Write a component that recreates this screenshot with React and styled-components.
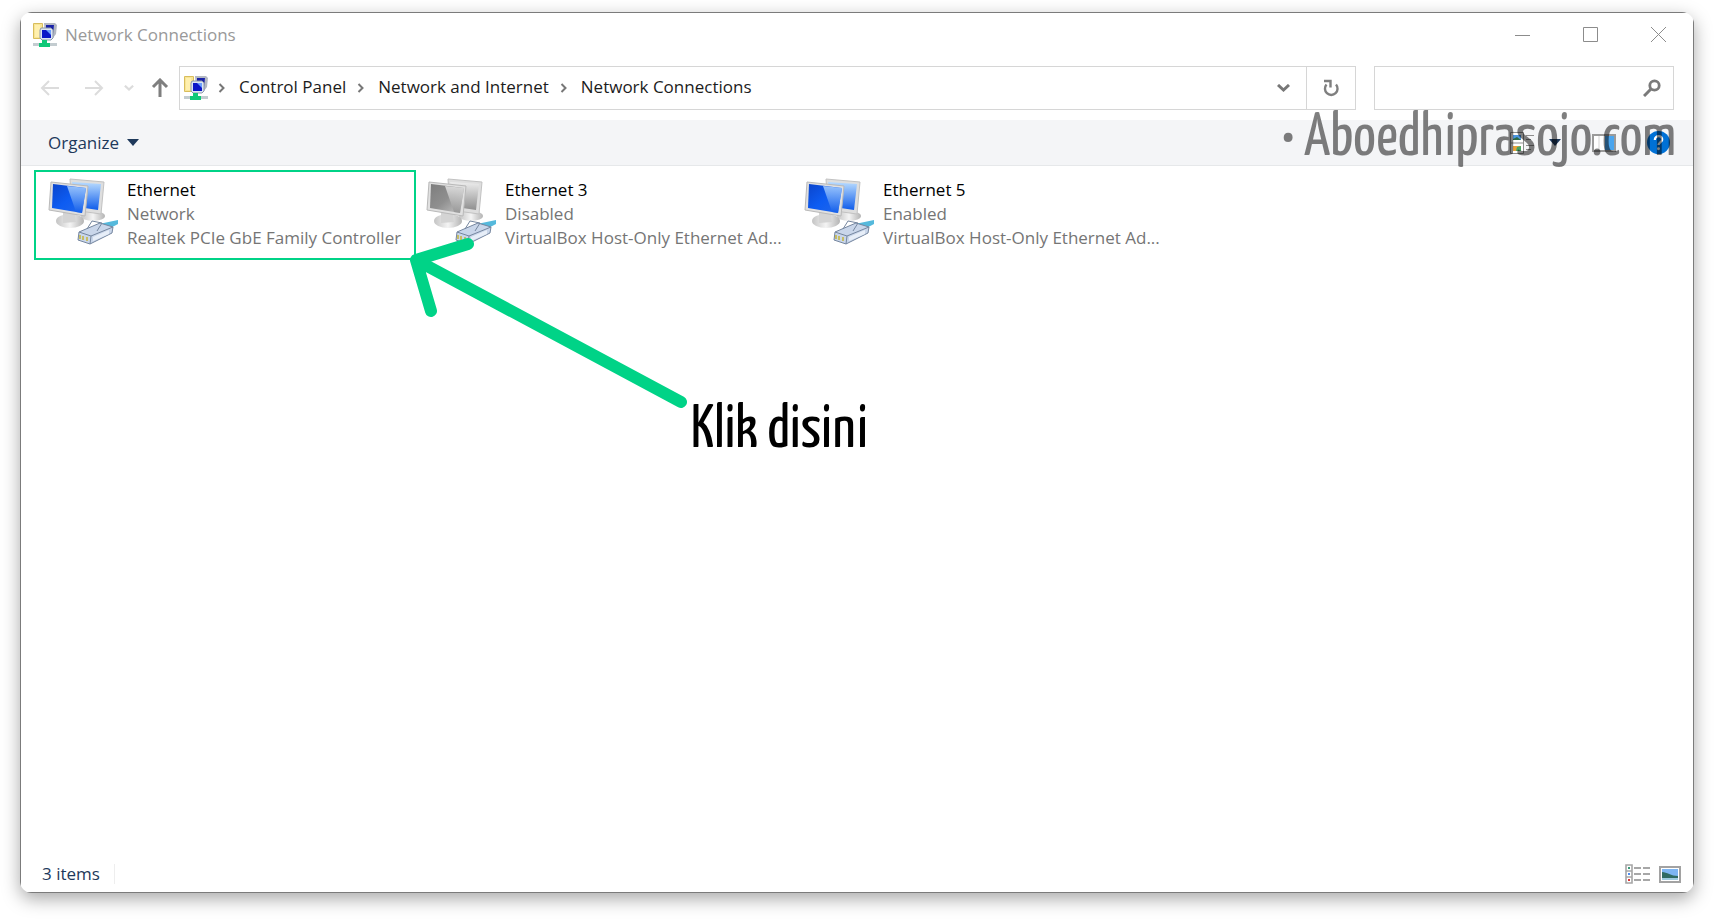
import React from "react";
import styled, { createGlobalStyle, css } from "styled-components";

const GlobalStyle = createGlobalStyle`
  * { box-sizing: border-box; }
  html, body, #root { height: 100%; }
  body { margin: 0; background: #fff; font-family: "Open Sans", "Noto Sans", sans-serif; font-size: 17px; line-height: 24px; }
  button, input { font: inherit; margin: 0; }
`;

const Desktop = styled.div`
  display: flex;
  min-height: 100%;
  padding: 12px 20px 29px 20px;
`;

const Window = styled.main`
  position: relative;
  flex: 1;
  min-width: 0;
  display: flex;
  flex-direction: column;
  padding: 1px;
  border-radius: 12px;
  background:
    linear-gradient(#7b7b7b, #7b7b7b) top / 100% 1px no-repeat,
    linear-gradient(#7b7b7b, #7b7b7b) bottom / 100% 1px no-repeat,
    linear-gradient(#7b7b7b, #7b7b7b) left / 1px 100% no-repeat,
    linear-gradient(#7b7b7b, #7b7b7b) right / 1px 100% no-repeat,
    #fff;
  box-shadow: 0 6px 18px rgba(0, 0, 0, 0.34);
`;

const TitleBar = styled.header`
  display: flex;
  align-items: center;
  height: 44px;
  padding-left: 12px;
`;

const Title = styled.h1`
  flex: 1;
  margin: 0 8px;
  font-size: 17px;
  font-weight: 400;
  color: #999;
`;

const Caption = styled.button`
  display: flex;
  align-items: center;
  justify-content: center;
  width: 68px;
  height: 42px;
  padding: 0;
  border: 0;
  background: none;
  color: #8c8c8c;
`;

const NavRow = styled.nav`
  display: flex;
  align-items: center;
  height: 63px;
  padding: 0 19px 2px 15px;
`;

const NavButton = styled.button`
  display: flex;
  align-items: center;
  justify-content: center;
  width: ${(p) => p.$width}px;
  height: 42px;
  padding: 0;
  border: 0;
  background: none;
  color: ${(p) => (p.disabled ? "#dcdcdc" : "#7f7f7f")};
`;

const UpButton = styled(NavButton)`
  margin-left: 6px;
`;

const field = css`
  display: flex;
  align-items: center;
  height: 44px;
  border: 1px solid #d6d6d6;
  background: #fff;
`;

const AddressBar = styled.div`
  ${field}
  flex: 1;
  min-width: 0;
  padding-left: 4px;
`;

const Crumbs = styled.ol`
  display: flex;
  align-items: center;
  flex: 1;
  margin: 0;
  padding: 0;
  list-style: none;
`;

const Crumb = styled.li`
  display: flex;
  align-items: center;
  padding-right: 1px;
  svg { margin: 0 13px 0 10px; }
`;

const CrumbLink = styled.a`
  padding-bottom: 2px;
  color: #1c1c1c;
  text-decoration: none;
  white-space: nowrap;
`;

const RefreshButton = styled(NavButton)`
  border-left: 1px solid #d6d6d6;
`;

const SearchBox = styled.label`
  ${field}
  width: 300px;
  margin-left: 18px;
  padding: 0 12px 0 8px;
`;

const SearchInput = styled.input`
  flex: 1;
  min-width: 0;
  border: 0;
  outline: 0;
  background: none;
`;

const Toolbar = styled.div`
  display: flex;
  align-items: center;
  justify-content: space-between;
  height: 46px;
  padding: 0 23px 0 27px;
  background: #f4f5f7;
  border-bottom: 1px solid #e6e8ea;
`;

const ToolButton = styled.button`
  display: flex;
  align-items: center;
  gap: ${(p) => p.$gap ?? 8}px;
  padding: 0;
  border: 0;
  background: none;
  color: #1e395b;
`;

const ToolGroup = styled.div`
  display: flex;
  align-items: center;
  gap: 31px;
`;

const Connections = styled.ul`
  display: flex;
  flex: 1;
  align-items: flex-start;
  margin: 0;
  padding: 4px 13px;
  list-style: none;
`;

const Connection = styled.li`
  display: flex;
  gap: 7px;
  width: ${(p) => (p.$marked ? 382 : 378)}px;
  height: 90px;
  padding: 6px 8px 6px ${(p) => (p.$marked ? 12 : 8)}px;
  border: 2px solid ${(p) => (p.$marked ? "#00d387" : "transparent")};
`;

const Details = styled.div`
  min-width: 0;
  white-space: nowrap;
`;

const Line = styled.div`
  color: ${(p) => (p.$strong ? "#000" : "#757575")};
`;

const StatusBar = styled.footer`
  display: flex;
  align-items: center;
  justify-content: space-between;
  height: 36px;
  padding: 0 12px 0 21px;
`;

const Count = styled.span`
  padding-right: 14px;
  border-right: 1px solid #eee;
  line-height: 20px;
  color: #1e395b;
`;

const ViewModes = styled.div`
  display: flex;
  gap: 8px;
`;

const Arrow = styled.svg`
  position: absolute;
  left: 380px;
  top: 222px;
  pointer-events: none;
`;

const annotation = css`
  position: absolute;
  margin: 0;
  font-family: "Yanone Kaffeesatz", "Open Sans Condensed", "Roboto Condensed", Lato, sans-serif;
  font-size: 60px;
  line-height: 60px;
  white-space: nowrap;
  pointer-events: none;
`;

const Hint = styled.p`
  ${annotation}
  left: 671px;
  top: 389px;
  color: #000;
`;

const Watermark = styled.p`
  ${annotation}
  right: 18px;
  top: 97px;
  color: rgba(0, 0, 0, 0.5);
`;

const FolderNet = () => (
  <svg width="24" height="24" viewBox="0 0 24 24" aria-hidden="true">
    <path d="M.500.500h9v15h-9z" fill="#f8e595" stroke="#d8bd5c" />
    <path d="M2 2h5v12H2z" fill="#fff0ae" />
    <path d="M11 0h11l2 2-1 9-3 4h-8z" fill="#b3b8c2" />
    <path d="M13 2h8l-1 9h-7z" fill="#1a22a8" />
    <path d="M8 5h10l2 2v8l-2 2H9l-2-2V7z" fill="#dbe4f2" stroke="#8c98aa" />
    <path d="M9 7h9v8H9z" fill="#0b16c8" />
    <path d="M13 7h5v5z" fill="#6da0ff" />
    <path d="M0 20h24v3H0z" fill="#c3ccd0" />
    <path d="M9 17h5v3h3v4H6v-4h3z" fill="#0fc878" />
  </svg>
);

const Chevron = ({ down, size = 8, color = "#777" }) => (
  <svg width={down ? size + 5 : size} height={down ? size : 10} viewBox={down ? "0 0 13 8" : "0 0 8 10"} fill="none" stroke={color} strokeWidth={down ? 3 : 2} aria-hidden="true">
    <path d={down ? "M1 1l5.500 5 5.500-5" : "M1.500 1l4 4-4 4"} />
  </svg>
);

const Triangle = () => (
  <svg width="12" height="7" viewBox="0 0 12 7" aria-hidden="true">
    <path d="M0 0h12L6 7z" fill="#1e395b" />
  </svg>
);

const StraightArrow = ({ turn = 0, weight = 2 }) => (
  <svg width="20" height="20" viewBox="0 0 20 20" fill="none" stroke="currentColor" strokeWidth={weight} aria-hidden="true">
    <path d="M19 10H2M9 3l-7 7 7 7" transform={`rotate(${turn} 10 10)`} />
  </svg>
);

const Adapter = ({ off, id }) => (
  <svg width="72" height="70" viewBox="0 0 72 70" aria-hidden="true">
    <defs>
      <linearGradient id={`${id}-front`} x1="0" y1="0" x2="1" y2="1">
        <stop offset="0" stopColor={off ? "#7d7d7d" : "#0b45cc"} />
        <stop offset=".5" stopColor={off ? "#8f8f8f" : "#0d5cf2"} />
        <stop offset="1" stopColor={off ? "#c8c8c8" : "#2368ea"} />
      </linearGradient>
      <linearGradient id={`${id}-glass`} x1="0" y1="0" x2="0" y2="1">
        <stop offset="0" stopColor={off ? "#ededed" : "#b9dcff"} />
        <stop offset="1" stopColor={off ? "#8f8f8f" : "#0f5cea"} />
      </linearGradient>
      <linearGradient id={`${id}-stand`}>
        <stop offset="0" stopColor="#c4c4c4" />
        <stop offset=".5" stopColor="#f4f4f4" />
        <stop offset="1" stopColor="#b4b4b4" />
      </linearGradient>
    </defs>
    <ellipse cx="45" cy="38" rx="12" ry="5" fill={`url(#${id}-stand)`} />
    <path d="M22 1l34 3-3 32-29-4z" fill="#dedede" stroke="#c2c2c2" />
    <path d="M24 4l29 2-3 26-20-3z" fill={`url(#${id}-glass)`} />
    <ellipse cx="22" cy="43" rx="14" ry="7" fill={`url(#${id}-stand)`} />
    <path d="M15 34l12 2 1 8-13 1z" fill="#d4d4d4" />
    <path d="M3 4l37 4-3 30-36-6z" fill="#e0e0e0" stroke="#b9b9b9" />
    <path d="M5 6l33 4-4 25-30-5z" fill={`url(#${id}-front)`} />
    <path d="M19 8l19 2-4 25-6-1z" fill={`url(#${id}-glass)`} opacity=".8" />
    <path d="M51 46l19-4v4l-15 8z" fill="#55b9dc" />
    <path d="M31 54l21-9 13 4-1 6-22 11-12-4z" fill="#c9d6ea" stroke="#75869f" />
    <path d="M31 54l12 4 22-9M43 58l-1 8M39 51l5-8 10 2-5 8" fill="none" stroke="#75869f" />
    <path d="M45 59l16-7v4l-16 7z" fill="#e7eef8" />
    <path d="M32 57v4M35 58v4M39 59v4" stroke="#c6bd66" strokeWidth="2" />
  </svg>
);

const CONNECTIONS = [
  { name: "Ethernet", status: "Network", device: "Realtek PCIe GbE Family Controller", marked: true },
  { name: "Ethernet 3", status: "Disabled", device: "VirtualBox Host-Only Ethernet Ad...", off: true },
  { name: "Ethernet 5", status: "Enabled", device: "VirtualBox Host-Only Ethernet Ad..." },
];

export default function App() {
  return (
    <>
      <GlobalStyle />
      <Desktop>
        <Window>
          <TitleBar>
            <FolderNet />
            <Title>Network Connections</Title>
            <Caption aria-label="Minimize">
              <svg width="16" height="16" stroke="currentColor"><path d="M0 8.500h15" /></svg>
            </Caption>
            <Caption aria-label="Maximize">
              <svg width="16" height="16" fill="none" stroke="currentColor"><path d="M.500.500h14v14H.500z" /></svg>
            </Caption>
            <Caption aria-label="Close">
              <svg width="16" height="16" stroke="currentColor"><path d="M0 0l15 15M15 0L0 15" /></svg>
            </Caption>
          </TitleBar>

          <NavRow>
            <NavButton $width={28} disabled aria-label="Back"><StraightArrow /></NavButton>
            <NavButton $width={60} disabled aria-label="Forward"><StraightArrow turn={180} /></NavButton>
            <NavButton $width={10} disabled aria-label="Recent locations"><Chevron down size={6} color="#dcdcdc" /></NavButton>
            <UpButton $width={39} aria-label="Up"><StraightArrow turn={90} weight={3} /></UpButton>
            <AddressBar>
              <FolderNet />
              <Crumbs>
                {["Control Panel", "Network and Internet", "Network Connections"].map((name) => (
                  <Crumb key={name}>
                    <Chevron />
                    <CrumbLink href="#">{name}</CrumbLink>
                  </Crumb>
                ))}
              </Crumbs>
              <NavButton $width={46} aria-label="Previous locations"><Chevron down /></NavButton>
              <RefreshButton $width={49} aria-label="Refresh">
                <svg width="18" height="18" viewBox="0 0 18 18" fill="none" stroke="currentColor" strokeWidth="2.400">
                  <path d="M14 5.500a6.300 6.300 0 1 1-9.500 0M2 2h6.500v6.500" />
                </svg>
              </RefreshButton>
            </AddressBar>
            <SearchBox>
              <SearchInput type="search" aria-label="Search Network Connections" />
              <svg width="18" height="18" viewBox="0 0 18 18" fill="none" stroke="#7a7a7a" aria-hidden="true">
                <circle cx="11.500" cy="6.500" r="4.700" strokeWidth="2.800" />
                <path d="M8 10l-7 7" strokeWidth="3" />
              </svg>
            </SearchBox>
          </NavRow>

          <Toolbar>
            <ToolButton>Organize <Triangle /></ToolButton>
            <ToolGroup>
              <ToolButton $gap={15} aria-label="Change your view">
                <svg width="24" height="22" viewBox="0 0 24 22">
                  <path d="M.500.500h13v21H.500zM.500 11h13" fill="#fff" stroke="#8d8d8d" />
                  <path d="M3 3h8v5H3z" fill="#4d96e0" />
                  <path d="M3 7l4-2 4 3H3z" fill="#2c6b48" />
                  <path d="M3 14h8v5H3z" fill="#e8a33b" />
                  <path d="M7 15l4-1v5H6z" fill="#4aa564" />
                  <path d="M16 3.500h8M16 7.500h5M16 13.500h8M16 17.500h5" stroke="#8d8d8d" />
                </svg>
                <Triangle />
              </ToolButton>
              <ToolButton aria-label="Show the preview pane">
                <svg width="24" height="18" viewBox="0 0 24 18">
                  <path d="M1 1h22v16H1z" fill="#fff" stroke="#9a9a9a" strokeWidth="2" />
                  <path d="M13 2h9v14h-9z" fill="#4aa5ee" />
                  <path d="M7 2v14" stroke="#d5d5d5" />
                </svg>
              </ToolButton>
              <ToolButton aria-label="Get help">
                <svg width="23" height="23" viewBox="0 0 22 22">
                  <circle cx="11" cy="11" r="11" fill="#0071d6" />
                  <path d="M7.500 8.500c0-5 7.500-4.500 7 0-.300 2-3.500 2.500-3.500 5" fill="none" stroke="#fff" strokeWidth="2.200" />
                  <circle cx="11" cy="17" r="1.400" fill="#fff" />
                </svg>
              </ToolButton>
            </ToolGroup>
          </Toolbar>

          <Connections>
            {CONNECTIONS.map((c, i) => (
              <Connection key={c.name} $marked={c.marked}>
                <Adapter off={c.off} id={`adapter${i}`} />
                <Details>
                  <Line $strong>{c.name}</Line>
                  <Line>{c.status}</Line>
                  <Line>{c.device}</Line>
                </Details>
              </Connection>
            ))}
          </Connections>

          <StatusBar>
            <Count>3 items</Count>
            <ViewModes>
              <ToolButton aria-label="Details view">
                <svg width="26" height="20" viewBox="0 0 26 20" fill="none">
                  <path d="M1 1h6v18H1zM1 7h6M1 13h6" stroke="#a6a6a6" strokeWidth="1.600" />
                  <path d="M3 3h2v2H3z" fill="#3a9b78" /><path d="M3 9h2v2H3z" fill="#4c8cf0" /><path d="M3 15h2v2H3z" fill="#d33" />
                  <path d="M9 4h7M18 4h7M9 10h7M18 10h7M9 16h7M18 16h7" stroke="#8a8a8a" strokeWidth="1.600" />
                </svg>
              </ToolButton>
              <ToolButton aria-label="Large icons view">
                <svg width="22" height="17" viewBox="0 0 22 17">
                  <path d="M1 1h20v15H1z" fill="#fff" stroke="#a2a2a2" strokeWidth="2" />
                  <path d="M3 3h16v11H3z" fill="#7db5f2" />
                  <path d="M3 6c5 0 9 4 16 4v2H3z" fill="#2f6b62" />
                  <path d="M3 12h16v2H3z" fill="#9fcbe0" />
                </svg>
              </ToolButton>
            </ViewModes>
          </StatusBar>

          <Arrow width="290" height="180" viewBox="400 234 290 180" fill="none" stroke="#00d387" strokeWidth="12" strokeLinecap="round" strokeLinejoin="round" aria-hidden="true">
            <path d="M468 244l-52 16 15 51M416 260l265 142" />
          </Arrow>
          <Hint>Klik disini</Hint>
          <Watermark>• Aboedhiprasojo.com</Watermark>
        </Window>
      </Desktop>
    </>
  );
}
